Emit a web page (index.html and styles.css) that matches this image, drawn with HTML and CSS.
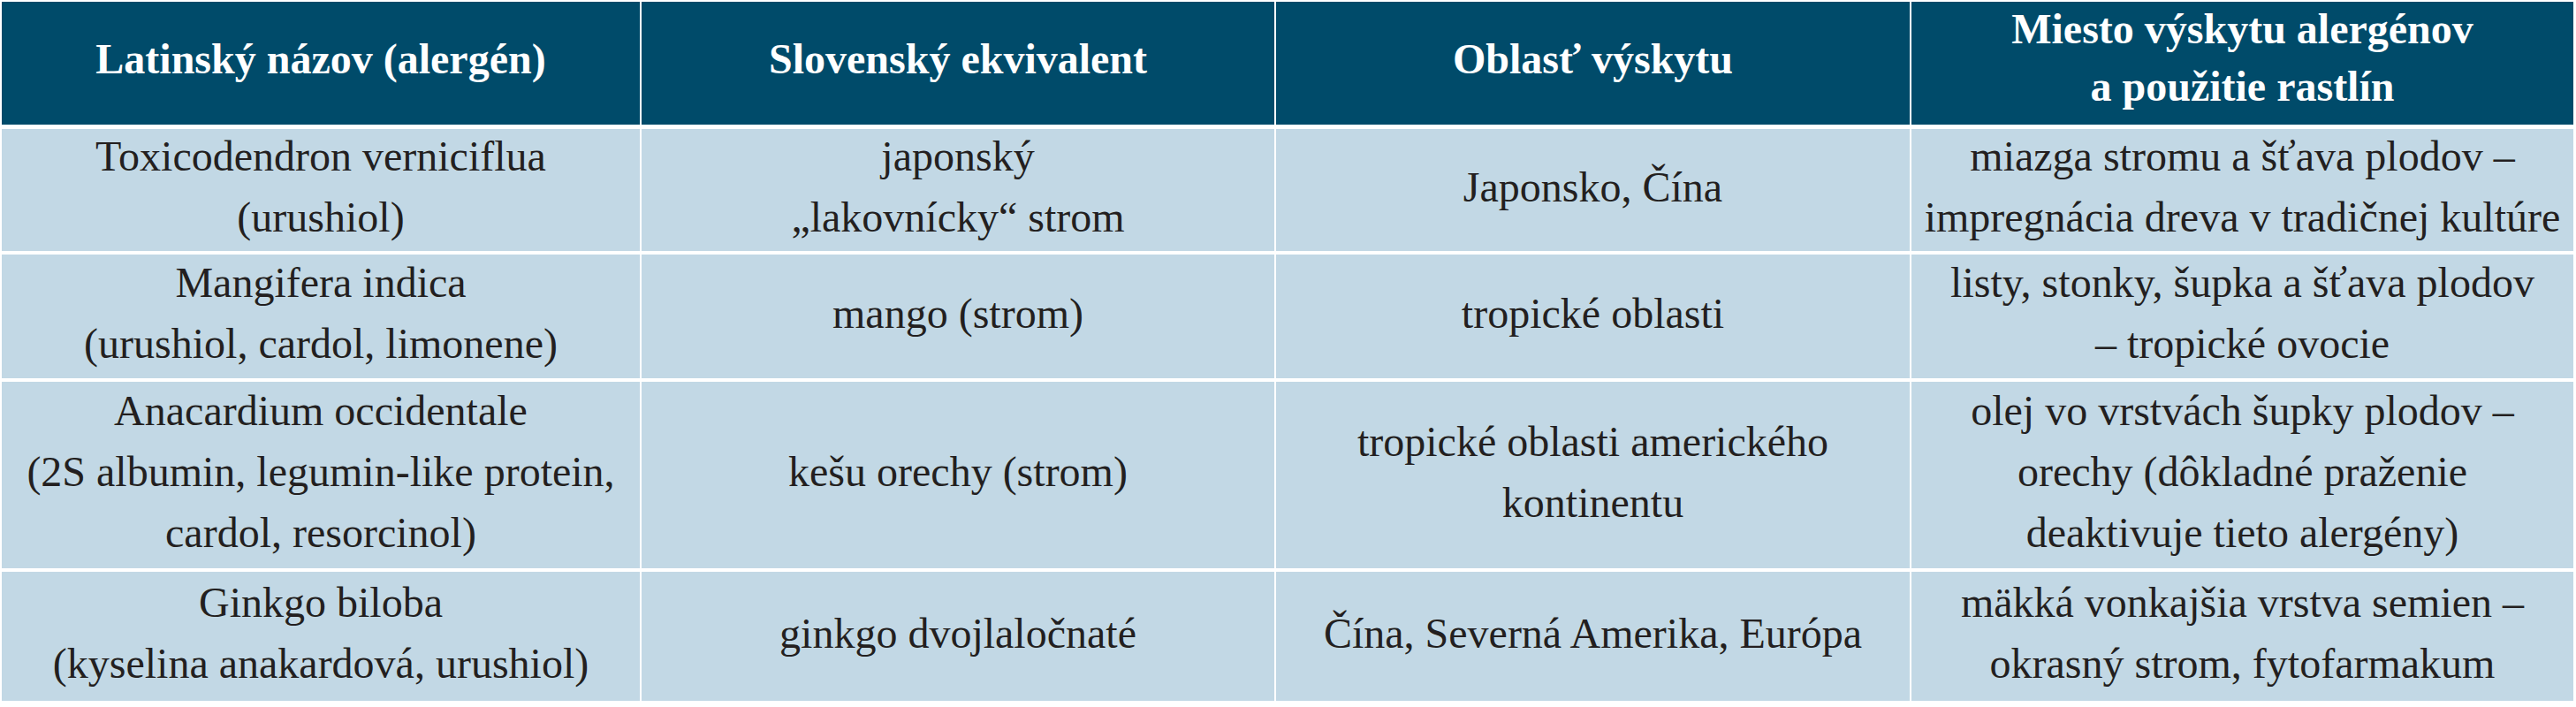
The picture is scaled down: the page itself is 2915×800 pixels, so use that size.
FILE: index.html
```html
<!DOCTYPE html>
<html lang="sk">
<head>
<meta charset="utf-8">
<title>Alergény</title>
<link rel="stylesheet" href="styles.css">
</head>
<body>
<div class="table">
  <div class="cell head">Latinský názov (alergén)</div>
  <div class="cell head">Slovenský ekvivalent</div>
  <div class="cell head">Oblasť výskytu</div>
  <div class="cell head two">Miesto výskytu alergénov<br>a použitie rastlín</div>

  <div class="cell">Toxicodendron verniciflua<br>(urushiol)</div>
  <div class="cell">japonský<br>„lakovnícky“ strom</div>
  <div class="cell">Japonsko, Čína</div>
  <div class="cell">miazga stromu a šťava plodov –<br>impregnácia dreva v tradičnej kultúre</div>

  <div class="cell">Mangifera indica<br>(urushiol, cardol, limonene)</div>
  <div class="cell">mango (strom)</div>
  <div class="cell">tropické oblasti</div>
  <div class="cell">listy, stonky, šupka a šťava plodov<br>– tropické ovocie</div>

  <div class="cell">Anacardium occidentale<br>(2S albumin, legumin-like protein,<br>cardol, resorcinol)</div>
  <div class="cell">kešu orechy (strom)</div>
  <div class="cell">tropické oblasti amerického<br>kontinentu</div>
  <div class="cell">olej vo vrstvách šupky plodov –<br>orechy (dôkladné praženie<br>deaktivuje tieto alergény)</div>

  <div class="cell">Ginkgo biloba<br>(kyselina anakardová, urushiol)</div>
  <div class="cell">ginkgo dvojlaločnaté</div>
  <div class="cell">Čína, Severná Amerika, Európa</div>
  <div class="cell">mäkká vonkajšia vrstva semien –<br>okrasný strom, fytofarmakum</div>
</div>
</body>
</html>
```

FILE: styles.css
```css
html, body {
  margin: 0;
  padding: 0;
  background: #ffffff;
}

body {
  font-family: "Liberation Serif", "Times New Roman", serif;
  color: #231f20;
}

.table {
  display: grid;
  grid-template-columns: 722px 716px 717px 749px;
  grid-template-rows: 140px 138px 140px 211px 146px;
  column-gap: 2px;
  row-gap: 4px;
  padding: 2px 0 0 2px;
  width: max-content;
}

.cell {
  display: flex;
  align-items: center;
  justify-content: center;
  text-align: center;
  background: #c2d8e5;
  font-size: 48px;
  line-height: 69px;
  white-space: nowrap;
  padding-bottom: 8px;
  box-sizing: border-box;
}

.head {
  background: #004b6a;
  color: #ffffff;
  font-weight: bold;
  margin-bottom: 1px;
  padding-bottom: 10px;
}

.head.two {
  line-height: 65px;
  padding-bottom: 14px;
}
```
